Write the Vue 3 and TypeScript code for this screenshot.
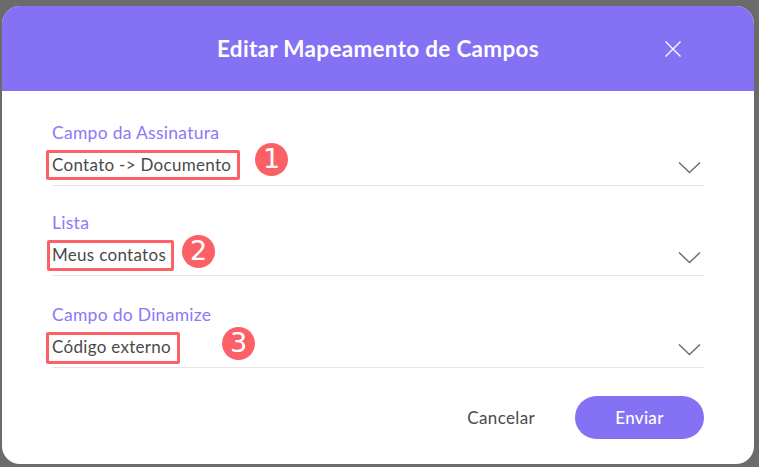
<script setup lang="ts">
interface Field {
  label: string
  value: string
  mark: string
  boxLeft: number
  boxWidth: number
  boxHeight: number
  markLeft: number
  markTop: number
}
const fields: Field[] = [
  { label: 'Campo da Assinatura', value: 'Contato -> Documento', mark: '1', boxLeft: -6, boxWidth: 194, boxHeight: 30, markLeft: 203, markTop: 20 },
  { label: 'Lista', value: 'Meus contatos', mark: '2', boxLeft: -5, boxWidth: 127, boxHeight: 31, markLeft: 130, markTop: 22 },
  { label: 'Campo do Dinamize', value: 'Código externo', mark: '3', boxLeft: -6, boxWidth: 134, boxHeight: 32, markLeft: 170, markTop: 22 }
]
</script>

<template>
  <div class="backdrop">
    <div class="modal">
      <header class="head">
        <h1>Editar Mapeamento de Campos</h1>
        <svg class="close" width="18" height="18" viewBox="0 0 18 18" aria-label="Fechar">
          <path d="M1.5 1.5 L16.5 16.5 M16.5 1.5 L1.5 16.5" stroke="#fff" stroke-width="1.3" fill="none" />
        </svg>
      </header>
      <div class="body">
        <div v-for="f in fields" :key="f.label" class="field">
          <label>{{ f.label }}</label>
          <div class="select">
            <span class="value">{{ f.value }}</span>
            <svg class="chev" width="23" height="13" viewBox="0 0 23 13">
              <path d="M1 1.5 L11.5 11.5 L22 1.5" stroke="#6f6f6f" stroke-width="1.5" fill="none" />
            </svg>
          </div>
          <span class="box" :style="{ left: f.boxLeft + 'px', width: f.boxWidth + 'px', height: f.boxHeight + 'px' }"></span>
          <span class="mark" :style="{ left: f.markLeft + 'px', top: f.markTop + 'px' }">{{ f.mark }}</span>
        </div>
        <footer class="actions">
          <button class="cancel" type="button">Cancelar</button>
          <button class="send" type="button">Enviar</button>
        </footer>
      </div>
    </div>
  </div>
</template>

<style scoped>
.backdrop {
  width: 759px;
  height: 467px;
  box-sizing: border-box;
  background: #6b6b6b;
  padding: 6px 5px 3px 2px;
  font-family: "Lato", "Noto Sans", sans-serif;
}
.modal {
  height: 100%;
  background: #fff;
  border-radius: 18px;
  overflow: hidden;
  display: flex;
  flex-direction: column;
}
.head {
  height: 85px;
  flex: none;
  background: #8571f4;
  display: flex;
  align-items: center;
  justify-content: center;
  position: relative;
}
.head h1 {
  margin: 0;
  color: #fff;
  font-size: 22.5px;
  font-weight: 700;
  letter-spacing: 0.3px;
}
.close {
  position: absolute;
  left: 662px;
  top: 34px;
}
.body {
  flex: 1;
  padding: 32px 50px 0 50px;
  display: flex;
  flex-direction: column;
}
.field {
  position: relative;
  height: 63px;
  margin-bottom: 27px;
  display: flex;
  flex-direction: column;
}
.field:nth-child(2) {
  margin-bottom: 29px;
}
.field label {
  color: #8b79f7;
  font-size: 17.5px;
  letter-spacing: 0.28px;
  line-height: 20px;
}
.select {
  flex: 1;
  display: flex;
  justify-content: space-between;
  align-items: flex-start;
  border-bottom: 1px solid #e6e6e6;
}
.value {
  color: #4a4a4a;
  font-size: 17px;
  letter-spacing: 0.3px;
  line-height: 21px;
  margin-top: 11px;
}
.chev {
  margin-top: 18px;
  margin-right: 3px;
}
.box {
  position: absolute;
  top: 27px;
  box-sizing: border-box;
  border: 3px solid #fb6066;
  border-radius: 2px;
  pointer-events: none;
}
.mark {
  position: absolute;
  width: 33px;
  height: 33px;
  border-radius: 50%;
  background: #fb6066;
  color: #fff;
  font-family: "DejaVu Sans", sans-serif;
  font-size: 27px;
  line-height: 32px;
  text-align: center;
}
.actions {
  display: flex;
  justify-content: flex-end;
  align-items: center;
  gap: 40px;
  margin-top: 1px;
}
.cancel {
  border: 0;
  background: none;
  padding: 0;
  color: #4a4a4a;
  font: inherit;
  font-size: 17px;
  letter-spacing: 0.35px;
}
.send {
  width: 129px;
  height: 43px;
  border: 0;
  border-radius: 22px;
  background: #8571f4;
  color: #fff;
  font: inherit;
  font-size: 17px;
  font-weight: 500;
  letter-spacing: 0.3px;
}
</style>

<style>
html, body { margin: 0; background: #6b6b6b; }
</style>
